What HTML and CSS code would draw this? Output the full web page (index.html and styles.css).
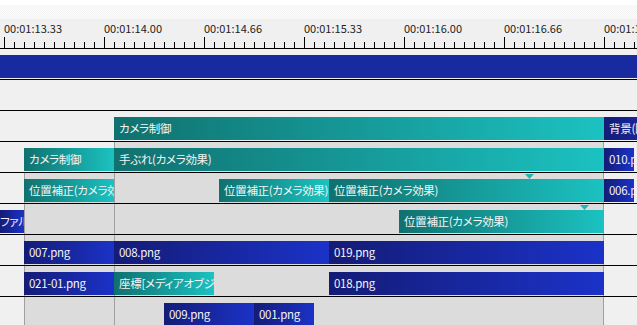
FILE: index.html
```html
<!DOCTYPE html>
<html>
<head>
    <title>タイムライン</title>
    <link rel="stylesheet" href="styles.css">
</head>
<body>
    <div class="timeline">
        <div class="top-strip"></div>
        <div class="dither"></div>

        <!-- 目盛り -->
        <div class="ruler">
            <div class="ruler-labels">
                <span class="ruler-label">00:01:13.33</span>
                <span class="ruler-label">00:01:14.00</span>
                <span class="ruler-label">00:01:14.66</span>
                <span class="ruler-label">00:01:15.33</span>
                <span class="ruler-label">00:01:16.00</span>
                <span class="ruler-label">00:01:16.66</span>
                <span class="ruler-label">00:01:17.33</span>
            </div>
            <div class="ticks"></div>
        </div>

        <div class="track">
            <div class="clip bar" style="left:0;width:637px"></div>
        </div>

        <div class="track"></div>

        <div class="track">
            <div class="clip teal" style="left:114px;width:490px">カメラ制御</div>
            <div class="clip blue" style="left:604px;width:80px">背景(図形)</div>
        </div>

        <div class="track shade-b">
            <div class="clip teal" style="left:24px;width:90px">カメラ制御</div>
            <div class="clip teal" style="left:114px;width:490px">手ぶれ(カメラ効果)</div>
            <div class="clip blue" style="left:604px;width:30px">010.png</div>
        </div>

        <div class="track shade-a">
            <div class="clip teal" style="left:24px;width:90px">位置補正(カメラ効果)</div>
            <div class="clip teal" style="left:219px;width:110px">位置補正(カメラ効果)</div>
            <div class="clip teal" style="left:329px;width:275px">位置補正(カメラ効果)</div>
            <div class="clip blue" style="left:604px;width:30px">006.png</div>
            <div class="marker" style="left:525px"></div>
        </div>

        <div class="track shade-a">
            <div class="clip blue cut" style="left:0;width:24px">ファル</div>
            <div class="clip teal" style="left:399px;width:205px">位置補正(カメラ効果)</div>
            <div class="marker" style="left:580px"></div>
        </div>

        <div class="track shade-a">
            <div class="clip blue" style="left:24px;width:90px">007.png</div>
            <div class="clip blue" style="left:114px;width:215px">008.png</div>
            <div class="clip blue" style="left:329px;width:275px">019.png</div>
        </div>

        <div class="track shade-a">
            <div class="clip blue" style="left:24px;width:90px">021-01.png</div>
            <div class="clip teal" style="left:114px;width:100px">座標[メディアオブジェクト]</div>
            <div class="clip blue" style="left:329px;width:275px">018.png</div>
        </div>

        <div class="track shade-a">
            <div class="clip blue" style="left:164px;width:90px">009.png</div>
            <div class="clip blue" style="left:254px;width:60px">001.png</div>
        </div>
    </div>
</body>
</html>
```

FILE: styles.css
```css
body {
    margin: 0;
    background-color: #f0f0f0;
    font-family: "Noto Sans CJK JP", "Noto Sans", sans-serif;
    overflow: hidden;
}

.timeline {
    width: 637px;
    height: 325px;
    overflow: hidden;
}

.top-strip {
    height: 5px;
    background-color: #fff;
}

.dither {
    height: 14px;
    background: repeating-conic-gradient(#f1f1f1 0 25%, #fff 0 50%) 0 0 / 2px 2px;
}

/* 目盛り */
.ruler {
    height: 29px;
    background-color: #f0f0f0;
    display: flex;
    flex-direction: column;
    justify-content: space-between;
}

.ruler-labels {
    display: flex;
    padding-left: 4px;
    padding-top: 2px;
    white-space: nowrap;
}

.ruler-label {
    flex: 0 0 100px;
    font-size: 11px;
    line-height: 14px;
    color: #1c1c1c;
}

.ticks {
    height: 11px;
    background:
        repeating-linear-gradient(to right, #000 0 1px, transparent 1px 100px) 4px 0 / 100% 11px no-repeat,
        repeating-linear-gradient(to right, #000 0 1px, transparent 1px 10px) 4px 100% / 100% 6px no-repeat;
}

/* レイヤー */
.track {
    position: relative;
    height: 31px;
    box-sizing: border-box;
    border-top: 1px solid #000;
    background-color: #f0f0f0;
}

.shade-b {
    background: linear-gradient(to right,
        #f0f0f0 0 114px, #a0a0a0 114px 115px,
        #dcdcdc 115px 603px, #a0a0a0 603px 604px, #f0f0f0 604px);
}

.shade-a {
    background: linear-gradient(to right,
        #f0f0f0 0 24px, #a0a0a0 24px 25px,
        #dcdcdc 25px 114px, #a0a0a0 114px 115px,
        #dcdcdc 115px 603px, #a0a0a0 603px 604px, #f0f0f0 604px);
}

.clip {
    position: absolute;
    top: 6px;
    height: 23px;
    box-sizing: border-box;
    padding-left: 5px;
    overflow: hidden;
    white-space: nowrap;
    font-size: 11.5px;
    line-height: 23px;
    letter-spacing: -0.3px;
    color: #f4f4f4;
    font-feature-settings: "palt";
}

.teal {
    background: linear-gradient(to right, #10716f, #1bc2c1);
}

.blue {
    background: linear-gradient(to right, #141c76, #1b32c8);
}

.bar {
    background-color: #182aa0;
}

.cut {
    padding-left: 0;
}

.marker {
    position: absolute;
    top: 1px;
    width: 9px;
    height: 5px;
    background-color: #1ab8b8;
    clip-path: polygon(0 0, 100% 0, 50% 100%);
}
```
